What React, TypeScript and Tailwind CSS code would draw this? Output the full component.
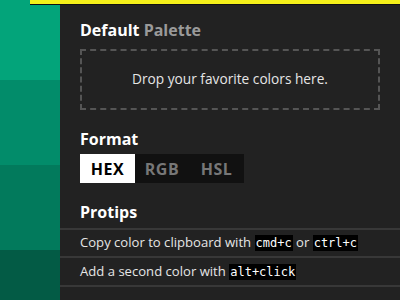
import React from 'react'

const greens = [
  { h: 'h-[80px]', c: 'bg-[#03a47a]' },
  { h: 'h-[85px]', c: 'bg-[#028c6a]' },
  { h: 'h-[85px]', c: 'bg-[#027a5c]' },
  { h: 'h-[50px]', c: 'bg-[#035b45]' },
]

function Kbd({ children }: { children: React.ReactNode }) {
  return (
    <code className="bg-black text-white px-[1px] py-[1px] font-['DejaVu_Sans_Mono',monospace] text-[12px]">
      {children}
    </code>
  )
}

export default function App() {
  return (
    <div className="w-[400px] h-[300px] flex overflow-hidden bg-[#222222] font-['Open_Sans',sans-serif] relative">
      <div className="w-[60px] flex flex-col shrink-0">
        {greens.map((g, i) => (
          <div key={i} className={`${g.h} ${g.c}`} />
        ))}
      </div>
      <div className="absolute left-[30px] top-0 right-0 h-[5px] bg-[#f5f01a] border-b border-[#111]" />
      <div className="flex-1 flex flex-col pt-[20px]">
        <div className="px-[20px]">
          <h2 className="text-[16px] font-bold text-white leading-[20px]">
            Default <span className="text-[#9a9a9a]">Palette</span>
          </h2>
          <div className="mt-[9px] w-[300px] h-[61px] border-2 border-dashed border-[#555] flex items-center justify-center text-[13.7px] text-[#e6e6e6]">
            Drop your favorite colors here.
          </div>
          <h2 className="mt-[19px] text-[16px] font-bold text-white leading-[20px]">Format</h2>
          <div className="mt-[5px] flex w-[164px] h-[29px] bg-[#111111] text-[16px] font-bold tracking-[0.5px]">
            <div className="w-[55px] bg-white text-black flex items-center justify-center">HEX</div>
            <div className="w-[54px] text-[#777] flex items-center justify-center">RGB</div>
            <div className="w-[55px] text-[#777] flex items-center justify-center">HSL</div>
          </div>
          <h2 className="mt-[19px] text-[16px] font-bold text-white leading-[20px]">Protips</h2>
        </div>
        <div className="mt-[6px] border-t-2 border-[#383838]">
          <div className="h-[28px] border-b-2 border-[#383838] px-[20px] flex items-center text-[13.1px] text-[#e6e6e6]">
            <span>
              Copy color to clipboard with <Kbd>cmd+c</Kbd> or <Kbd>ctrl+c</Kbd>
            </span>
          </div>
          <div className="h-[29px] border-b-2 border-[#383838] px-[20px] flex items-center text-[13.1px] text-[#e6e6e6]">
            <span>
              Add a second color with <Kbd>alt+click</Kbd>
            </span>
          </div>
        </div>
      </div>
    </div>
  )
}
